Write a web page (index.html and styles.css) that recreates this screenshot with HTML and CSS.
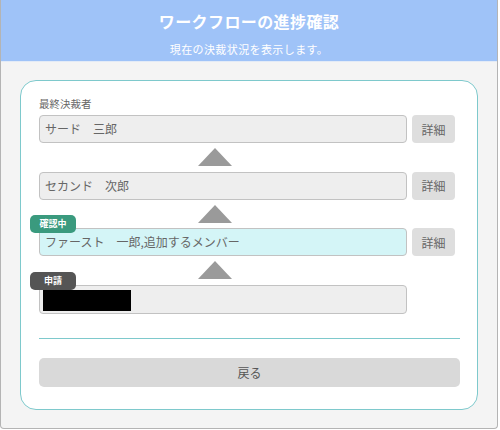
FILE: index.html
```html
<!DOCTYPE html>
<html lang="ja">
<head>
<meta charset="utf-8">
<title>ワークフローの進捗確認</title>
<link rel="stylesheet" href="styles.css">
</head>
<body>
<div class="dialog">
  <header class="head">
    <h1 class="title">ワークフローの進捗確認</h1>
    <p class="subtitle">現在の決裁状況を表示します。</p>
  </header>
  <main class="body">
    <section class="card">
      <div class="label">最終決裁者</div>
      <div class="row">
        <div class="field">サード　三郎</div>
        <button class="detail">詳細</button>
      </div>
      <div class="arrow"></div>
      <div class="row">
        <div class="field">セカンド　次郎</div>
        <button class="detail">詳細</button>
      </div>
      <div class="arrow"></div>
      <div class="row">
        <div class="field current">ファースト　一郎,追加するメンバー<span class="badge green">確認中</span></div>
        <button class="detail">詳細</button>
      </div>
      <div class="arrow"></div>
      <div class="row">
        <div class="field applicant"><span class="redact"></span><span class="badge dark">申請</span></div>
      </div>
      <hr class="divider">
      <button class="back">戻る</button>
    </section>
  </main>
</div>
</body>
</html>
```

FILE: styles.css
```css
* { box-sizing: border-box; }
html, body { margin: 0; padding: 0; background: #ffffff; }
body { font-family: "Noto Sans CJK JP", "Noto Sans", sans-serif; }

.dialog {
  width: 498px;
  height: 429px;
  border: 1px solid #b4b4b4;
  border-top: none;
  border-radius: 0 0 4px 4px;
  background: #f4f4f4;
  overflow: hidden;
  display: flex;
  flex-direction: column;
}

.head {
  height: 62px;
  background: #9fc3f8;
  border-bottom: 1px solid #e3ebf7;
  display: flex;
  flex-direction: column;
  align-items: center;
  padding-top: 10px;
}
.title {
  margin: 0;
  font-size: 16px;
  line-height: 22px;
  font-weight: bold;
  color: #ffffff;
  letter-spacing: 0.4px;
}
.subtitle {
  margin: 9px 0 0;
  font-size: 11px;
  line-height: 16px;
  color: #ffffff;
  letter-spacing: 0.4px;
}

.body {
  flex: 1;
  padding: 18px 19px 0;
}

.card {
  height: 330px;
  background: #ffffff;
  border: 1px solid #7ec9cc;
  border-radius: 16px;
  padding: 16px 17px 0 18px;
  display: flex;
  flex-direction: column;
}

.label {
  font-size: 10.5px;
  line-height: 14px;
  color: #666666;
  margin-bottom: 4px;
}

.row {
  display: flex;
  gap: 5px;
  height: 28px;
}
.row.last { height: 29px; }

.field {
  position: relative;
  width: 368px;
  height: 28px;
  border: 1px solid #c2c2c2;
  border-radius: 4px;
  background: #eeeeee;
  color: #666666;
  font-size: 12px;
  line-height: 26px;
  padding-left: 5px;
  white-space: nowrap;
}
.field.current { background: #d4f5f7; }
.field.applicant { height: 29px; padding: 4px 0 0 3px; }

.redact {
  display: block;
  width: 88px;
  height: 21px;
  background: #000000;
}

.badge {
  position: absolute;
  left: -10px;
  top: -14px;
  width: 46px;
  height: 18px;
  border-radius: 5px;
  color: #ffffff;
  font-size: 9px;
  font-weight: bold;
  line-height: 18px;
  text-align: center;
}
.badge.green { background: #3a9a7e; }
.badge.dark { background: #555555; }

.detail {
  width: 43px;
  height: 28px;
  border: none;
  border-radius: 4px;
  background: #dedede;
  color: #666666;
  font-family: inherit;
  font-size: 12px;
  padding: 0;
}

.arrow {
  width: 0;
  height: 0;
  margin: 5px 0 5.5px 159px;
  border-left: 17.5px solid transparent;
  border-right: 17.5px solid transparent;
  border-bottom: 18px solid #9a9a9a;
}

.divider {
  margin: 25px 0 0;
  border: none;
  border-top: 1px solid #7ec9cc;
  height: 0;
  flex: none;
}

.back {
  margin-top: 19px;
  height: 29px;
  width: 100%;
  border: none;
  border-radius: 5px;
  background: #d9d9d9;
  color: #555555;
  font-family: inherit;
  font-size: 12px;
  padding: 0;
  flex: none;
}
```
